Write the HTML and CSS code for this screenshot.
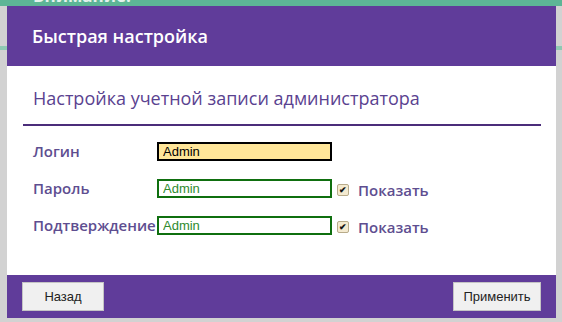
FILE: index.html
```html
<!DOCTYPE html>
<html lang="ru">
<head>
<meta charset="UTF-8">
<title>Быстрая настройка</title>
<link rel="stylesheet" href="styles.css">
</head>
<body>

<div class="page">
  <div class="topbar"><span class="notice">Внимание!</span></div>
  <div class="band"></div>
</div>

<div class="dialog">
  <div class="dlg-head">Быстрая настройка</div>
  <div class="dlg-body">
    <h2>Настройка учетной записи администратора</h2>
    <div class="rows">
      <div class="row">
        <label>Логин</label>
        <input class="login" type="text" value="Admin">
      </div>
      <div class="row">
        <label>Пароль</label>
        <input class="pass" type="text" value="Admin">
        <span class="chk"><span class="box">&#10004;</span>Показать</span>
      </div>
      <div class="row">
        <label>Подтверждение</label>
        <input class="pass" type="text" value="Admin">
        <span class="chk"><span class="box">&#10004;</span>Показать</span>
      </div>
    </div>
  </div>
  <div class="dlg-foot">
    <button>Назад</button>
    <button class="apply">Применить</button>
  </div>
</div>

</body>
</html>
```

FILE: styles.css
```css
body{margin:0;background:#cdcdcd;font-family:"Open Sans",sans-serif;overflow:hidden}
.page{height:322px;background:#d2d2d2}
.topbar{height:6px;background:#5db596;overflow:hidden;padding-left:33px}
.notice{display:block;margin-top:-14px;color:#e4f2ec;font-weight:700;font-size:17px;line-height:20px}
.band{margin-top:40px;height:4px;background:#8fc9b3}

.dialog{position:absolute;left:7px;top:6px;width:549px;height:312px;display:flex;flex-direction:column;background:#fff}
.dlg-head{height:60px;background:#603c9a;color:#fff;font-weight:600;font-size:18px;line-height:60px;padding-left:25px}
.dlg-body{flex:1;padding:0 15px 0 16px}
.dlg-body h2{margin:0;padding:17px 0 0 10px;height:41px;font-weight:400;font-size:18px;line-height:30px;color:#5a4290;border-bottom:2px solid #4b2d7a}
.rows{padding:16px 0 0 10px;display:flex;flex-direction:column;gap:18px}
.row{display:flex;align-items:center;height:19px}
.row label{width:124px;font-size:15px;font-weight:600;color:#5e4e90;white-space:nowrap;padding-bottom:2px}
input{box-sizing:border-box;width:175px;height:19px;padding:0 4px;font-family:"Liberation Sans",Arial,sans-serif;font-size:13px;outline:none}
input.login{background:#ffe699;border:2px solid #000;color:#000}
input.pass{background:#fff;border:2px solid #0f6f0f;color:#2e8a2e}
.chk{display:flex;align-items:center;margin-left:5px;font-size:15px;font-weight:600;color:#5e4e90;padding-top:3px}
.box{width:10px;height:10px;border:1px solid #b8ab8a;background:#f4ead0;border-radius:2px;font-size:9px;line-height:10px;text-align:center;color:#111;margin-right:9px}

.dlg-foot{height:43px;background:#603c9a;display:flex;justify-content:space-between;align-items:flex-start;padding:7px 15px 0 15px;box-sizing:border-box}
button{width:82px;height:29px;background:#f0f0f0;border:1px solid #c4c4c4;font-family:"Liberation Sans",Arial,sans-serif;font-size:13px;color:#222}
button.apply{width:88px}
```
